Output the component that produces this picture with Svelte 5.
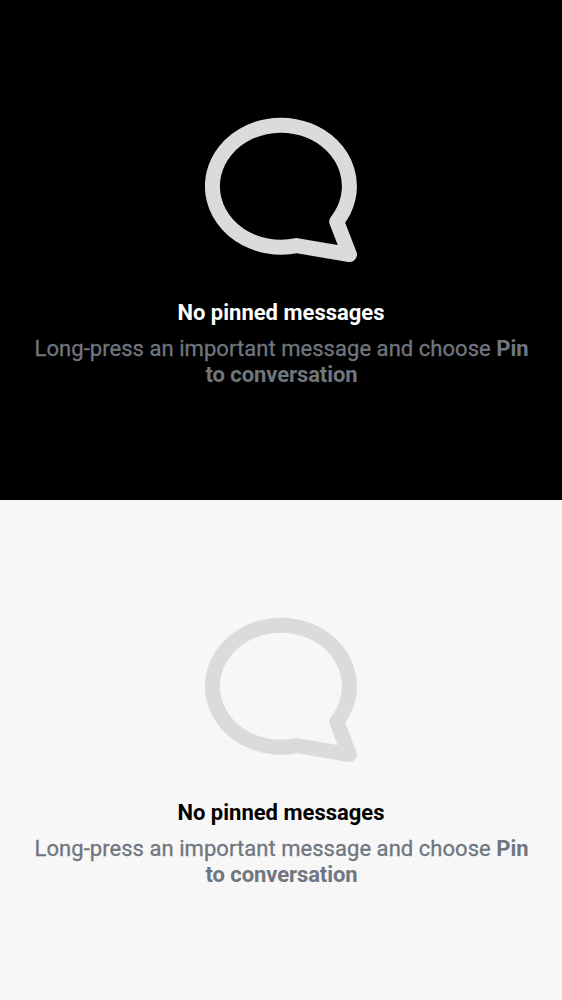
<script>
  const themes = ['dark', 'light'];
</script>

<main>
  {#each themes as theme}
    <section class={theme}>
      <svg viewBox="0 0 152 146" width="152" height="146" fill="none" aria-hidden="true">
        <path d="M131.700 104.600A68.500 61 0 1 0 76 130.200Q84.500 130.200 91.500 128.600L144.500 137.600Z" stroke="#dbdbdb" stroke-width="15" stroke-linejoin="round" />
      </svg>
      <h2>No pinned messages</h2>
      <p>Long-press an important message and choose <b>Pin to conversation</b></p>
    </section>
  {/each}
</main>

<style>
  :global(body) { margin: 0; }
  main { width: 562px; font-family: Roboto, sans-serif; }
  section { box-sizing: border-box; height: 500px; padding: 117px 32px 0; display: flex; flex-direction: column; align-items: center; text-align: center; }
  .dark { background: #000; color: #fff; }
  .light { background: #f7f7f7; color: #000; }
  svg { display: block; flex: none; }
  h2 { margin: 37px 0 0; font-size: 22px; line-height: 26px; font-weight: 700; }
  p { margin: 10px 0 0; padding-left: 1px; color: #70767f; font-size: 22px; line-height: 26px; font-weight: 400; letter-spacing: 0.045px; -webkit-text-stroke: 0.3px currentColor; }
  b { font-weight: 700; letter-spacing: -0.08px; -webkit-text-stroke: 0; }
</style>
